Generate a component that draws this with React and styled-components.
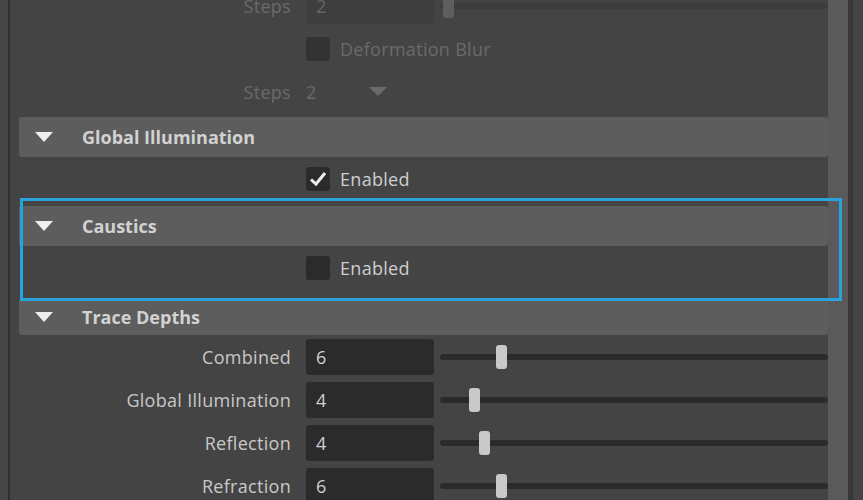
import React from 'react';
import styled, { createGlobalStyle } from 'styled-components';

const Global = createGlobalStyle`
  html, body { margin: 0; background: #444; overflow: hidden; }
  body { font-family: "Open Sans", "DejaVu Sans", sans-serif; }
`;

const Frame = styled.div`
  position: relative;
  display: flex;
  height: 500px;
  background: #444;
`;

const LeftEdge = styled.div`
  width: 8px;
  background: #464646;
  border-right: 2px solid #2f2f2f;
  flex: none;
`;

const Content = styled.div`
  flex: 1;
  padding-left: 9px;
  margin-top: -16px;
`;

const ScrollBar = styled.div`
  width: 20px;
  background: #5a5a5a;
  flex: none;
  border-right: 5px solid #373737;
  margin-right: 10px;
`;

const Row = styled.div`
  display: flex;
  align-items: center;
  height: 43px;
`;

const Label = styled.div`
  width: 272px;
  text-align: right;
  padding-right: 15px;
  font-size: 18px;
  letter-spacing: 0.3px;
  color: ${p => (p.dim ? '#6a6a6a' : '#c8c8c8')};
`;

const Field = styled.div`
  width: 128px;
  height: 36px;
  box-sizing: border-box;
  padding-left: 10px;
  display: flex;
  align-items: center;
  background: ${p => (p.dim ? '#3e3e3e' : '#2b2b2b')};
  border-radius: 3px;
  font-size: 18px;
  color: ${p => (p.dim ? '#666' : '#d0d0d0')};
`;

const Slider = styled.div`
  position: relative;
  flex: 1;
  height: 6px;
  margin-left: 6px;
  background: ${p => (p.dim ? '#3c3c3c' : '#2b2b2b')};
  border-radius: 3px;
`;

const Thumb = styled.div`
  position: absolute;
  top: -9px;
  width: 11px;
  height: 24px;
  border-radius: 3px;
  background: ${p => (p.dim ? '#5e5e5e' : '#c9c9c9')};
`;

const Check = styled.div`
  width: 24px;
  height: 24px;
  border-radius: 3px;
  background: ${p => (p.dim ? '#333' : '#2b2b2b')};
  display: flex;
  align-items: center;
  justify-content: center;
  margin-left: 287px;
  margin-right: 10px;
`;

const CheckText = styled.span`
  font-size: 18px;
  letter-spacing: 0.3px;
  color: ${p => (p.dim ? '#6a6a6a' : '#cfcfcf')};
`;

const Header = styled.div`
  display: flex;
  align-items: center;
  height: ${p => p.h || 40}px;
  margin-top: ${p => p.mt || 0}px;
  background: #5d5d5d;
  border-radius: 3px;
  font-size: 18px;
  font-weight: bold;
  color: #d2d2d2;
`;

const Arrow = styled.span`
  width: 0;
  height: 0;
  border-left: 9px solid transparent;
  border-right: 9px solid transparent;
  border-top: 10px solid #eee;
  margin: 0 29px 0 16px;
`;

const DropArrow = styled.span`
  width: 0;
  height: 0;
  border-left: 9px solid transparent;
  border-right: 9px solid transparent;
  border-top: 9px solid #6a6a6a;
  margin-left: 52px;
`;

const Highlight = styled.div`
  position: absolute;
  left: 20px;
  top: 198px;
  width: 816px;
  height: 97px;
  border: 3px solid #29a3dc;
  pointer-events: none;
`;

const SliderRow = ({ label, value, pos, dim }) => (
  <Row>
    <Label dim={dim}>{label}</Label>
    <Field dim={dim}>{value}</Field>
    <Slider dim={dim}>
      <Thumb dim={dim} style={{ left: pos }} />
    </Slider>
  </Row>
);

const CheckRow = ({ label, checked, dim }) => (
  <Row>
    <Check dim={dim}>
      {checked && (
        <svg width="18" height="16" viewBox="0 0 18 16">
          <path d="M2 8.5 L7 13 L16 2" stroke="#eee" strokeWidth="3" fill="none" />
        </svg>
      )}
    </Check>
    <CheckText dim={dim}>{label}</CheckText>
  </Row>
);

export default function App() {
  return (
    <Frame>
      <Global />
      <LeftEdge />
      <Content>
        <SliderRow label="Steps" value="2" pos={3} dim />
        <CheckRow label="Deformation Blur" dim />
        <Row>
          <Label dim>Steps</Label>
          <CheckText dim>2</CheckText>
          <DropArrow />
        </Row>
        <Header mt={4}><Arrow />Global Illumination</Header>
        <CheckRow label="Enabled" checked />
        <Header mt={6}><Arrow />Caustics</Header>
        <CheckRow label="Enabled" />
        <Header mt={10} h={36}><Arrow />Trace Depths</Header>
        <SliderRow label="Combined" value="6" pos={56} />
        <SliderRow label="Global Illumination" value="4" pos={29} />
        <SliderRow label="Reflection" value="4" pos={39} />
        <SliderRow label="Refraction" value="6" pos={56} />
      </Content>
      <ScrollBar />
      <Highlight />
    </Frame>
  );
}
